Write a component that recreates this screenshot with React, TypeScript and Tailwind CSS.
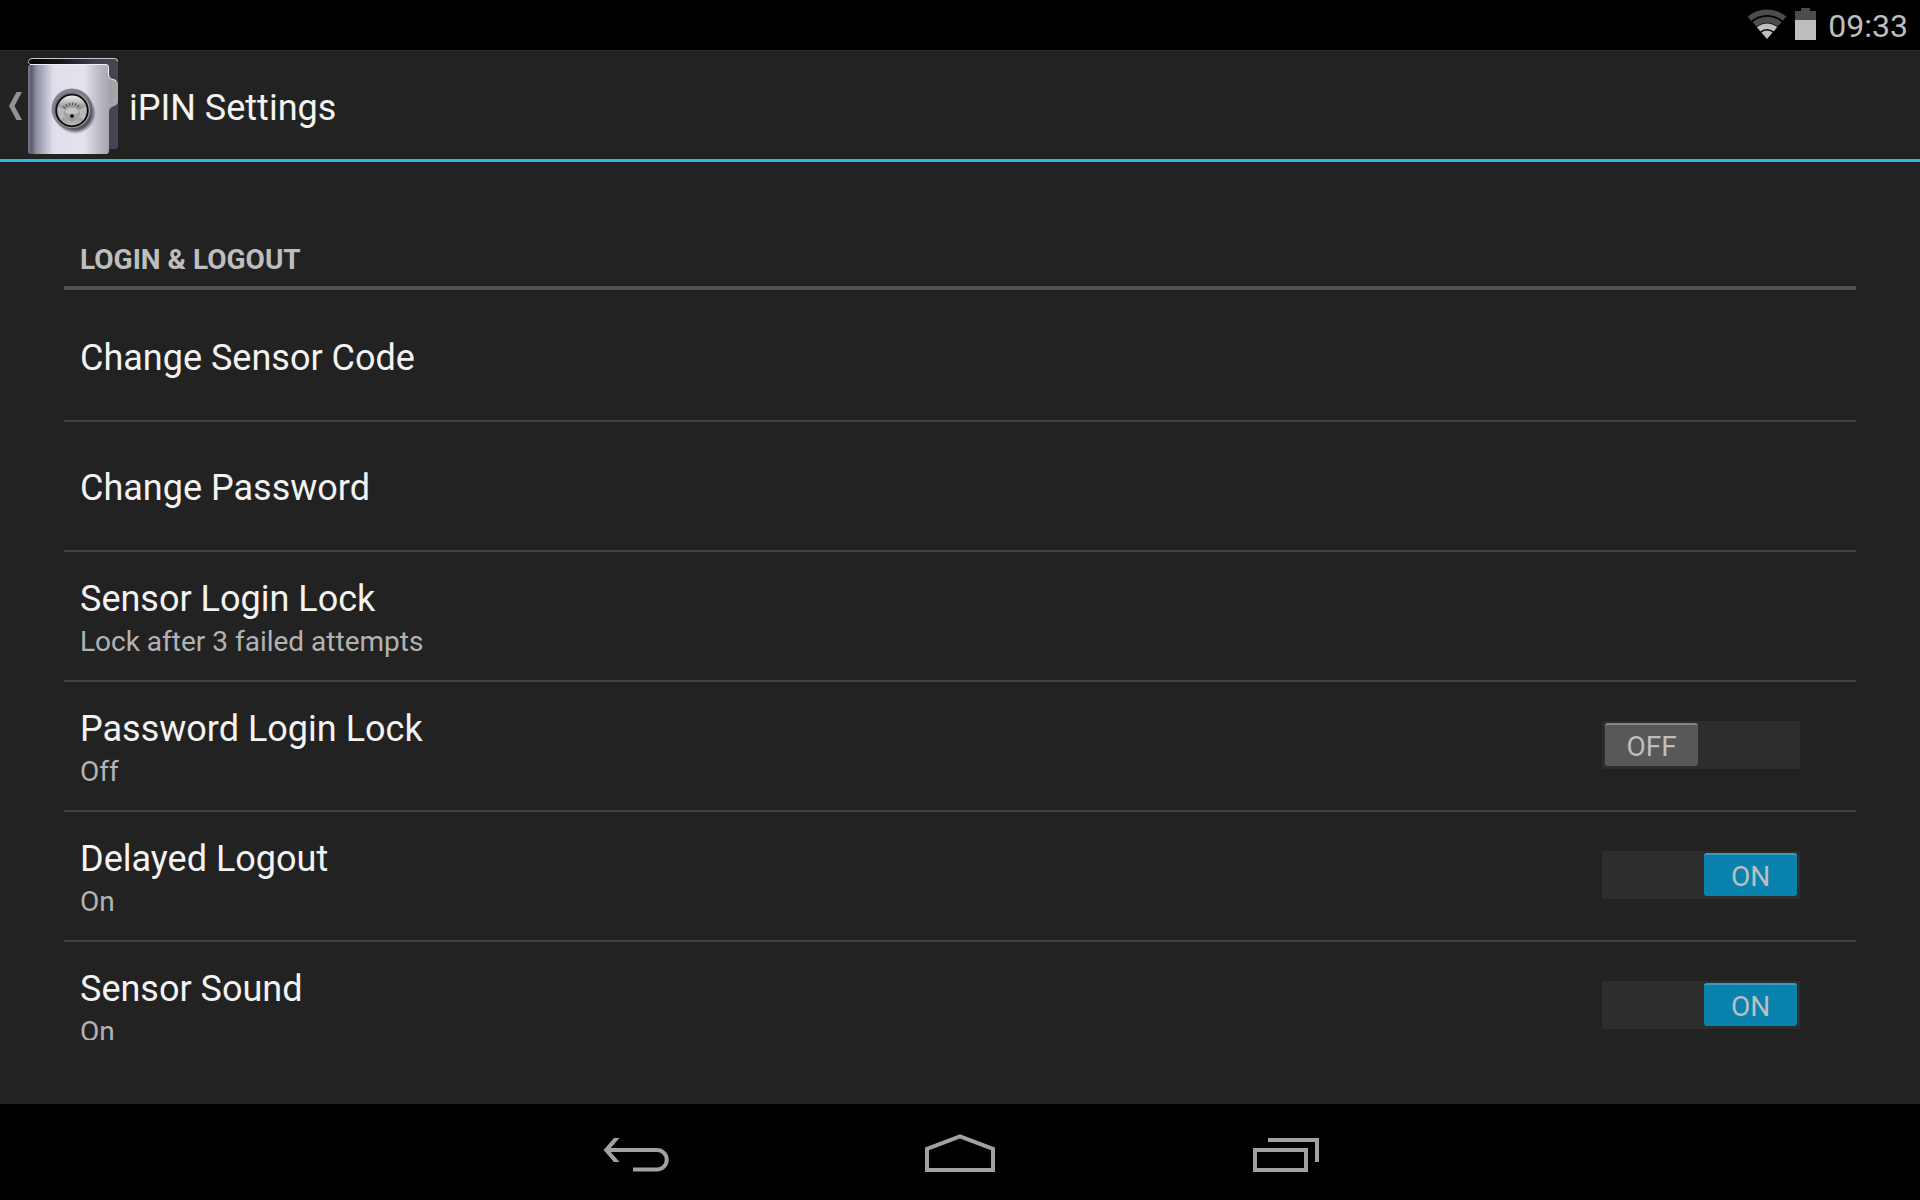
import React, { useState } from 'react';
import clsx from 'clsx';

type Setting = {
  id: string;
  title: string;
  summary?: string;
  toggle?: boolean;
};

const settings: Setting[] = [
  { id: 'sensor-code', title: 'Change Sensor Code' },
  { id: 'password', title: 'Change Password' },
  { id: 'sensor-lock', title: 'Sensor Login Lock', summary: 'Lock after 3 failed attempts' },
  { id: 'password-lock', title: 'Password Login Lock', toggle: true },
  { id: 'delayed-logout', title: 'Delayed Logout', toggle: true },
  { id: 'sensor-sound', title: 'Sensor Sound', toggle: true },
];

const WifiIcon = () => (
  <svg width="40" height="32" viewBox="0 0 40 32" aria-hidden="true">
    <defs>
      <clipPath id="wifi-fan">
        <path d="M20 31L-5 2V-6h50v8z" />
      </clipPath>
    </defs>
    <g clipPath="url(#wifi-fan)" fill="none">
      <circle cx="20" cy="31" r="26.800" stroke="#4c4c4c" strokeWidth="5.500" />
      <circle cx="20" cy="31" r="19.300" stroke="#4c4c4c" strokeWidth="6" />
      <circle cx="20" cy="31" r="12.800" stroke="#bebebe" strokeWidth="5.500" />
      <circle cx="20" cy="31" r="8.500" fill="#bebebe" />
    </g>
  </svg>
);

const BatteryIcon = () => (
  <svg width="21" height="32" viewBox="0 0 21 32" aria-hidden="true">
    <path d="M6 0h9v3h6v9H0V3h6z" fill="#4c4c4c" />
    <path d="M0 12h21v20H0z" fill="#bebebe" />
  </svg>
);

const SafeIcon = () => (
  <svg width="90" height="96" viewBox="8 8 90 96" aria-hidden="true">
    <defs>
      <linearGradient id="cover" x1="0" x2="1" y1="0" y2="0">
        <stop offset="0" stopColor="#77778a" />
        <stop offset="0.04" stopColor="#5c5c70" />
        <stop offset="0.09" stopColor="#8d8da0" />
        <stop offset="0.28" stopColor="#dfdeea" />
        <stop offset="0.62" stopColor="#e3e2ed" />
        <stop offset="0.8" stopColor="#b9b9c2" />
        <stop offset="0.92" stopColor="#a2a2a6" />
        <stop offset="1" stopColor="#a8a8ac" />
      </linearGradient>
      <linearGradient id="back" x1="0" x2="1" y1="0" y2="0">
        <stop offset="0" stopColor="#000000" />
        <stop offset="0.35" stopColor="#15151c" />
        <stop offset="0.75" stopColor="#40404f" />
        <stop offset="1" stopColor="#454555" />
      </linearGradient>
      <linearGradient id="bezel" x1="0" x2="1" y1="0" y2="1">
        <stop offset="0" stopColor="#858793" />
        <stop offset="0.5" stopColor="#7d808c" />
        <stop offset="1" stopColor="#3f414b" />
      </linearGradient>
      <linearGradient id="ring" x1="0" x2="1" y1="0" y2="1">
        <stop offset="0" stopColor="#5f626c" />
        <stop offset="0.5" stopColor="#8b8e99" />
        <stop offset="1" stopColor="#b4b7c1" />
      </linearGradient>
      <linearGradient id="face" x1="0" x2="0" y1="0" y2="1">
        <stop offset="0" stopColor="#f2f2f2" />
        <stop offset="0.35" stopColor="#a4a4a4" />
        <stop offset="0.6" stopColor="#858585" />
        <stop offset="1" stopColor="#bdbdbd" />
      </linearGradient>
      <radialGradient id="shadow">
        <stop offset="0.75" stopColor="#33333d" stopOpacity="0.9" />
        <stop offset="1" stopColor="#33333d" stopOpacity="0" />
      </radialGradient>
    </defs>
    <path d="M8 11q0-3 3-3h84q3 0 3 3v85q0 3-3 3H12q-4 0-4-4z" fill="url(#back)" />
    <path d="M9.500 14q-1-1-1-2.500 0-3 3.500-3h82.500q3 0 3 3" fill="none" stroke="#c9c9d0" />
    <path
      d="M8 17q0-3 3-3h75q3 0 3 3v8q0 3 3 4l4 1.500q2 1 2 3V52q0 2-2 3l-4 2q-3 1-3 5v39q0 3-3 3H11q-3 0-3-3z"
      fill="url(#cover)"
    />
    <path d="M10 14.500h75q3.500 0 3.500 3.500v7q0 3 3 4l4.500 1.500" fill="none" stroke="#f0f0f5" />
    <circle cx="55" cy="63" r="21" fill="url(#shadow)" />
    <circle cx="52" cy="59" r="20.500" fill="url(#bezel)" />
    <circle cx="52" cy="60" r="18" fill="url(#ring)" />
    <circle cx="52" cy="60.500" r="15.800" fill="url(#face)" stroke="#0b0b0d" strokeWidth="1.800" />
    <path d="M38 57l6 2 1 7-4 4a15 15 0 0 1-3-13zM66 57l-6 2-1 7 4 4a15 15 0 0 0 3-13z" fill="#c9c9c9" opacity="0.7" />
    <circle cx="52" cy="63.500" r="8.500" fill="#a0a0a0" stroke="#b8b8b8" />
    <path d="M44 58a10 10 0 0 1 16 0" fill="none" stroke="#5c5c5c" strokeWidth="3" strokeDasharray="1.500 1.500" />
    <path d="M45 62a8 8 0 0 1 14 0l-7 4z" fill="#c4c4c4" />
    <circle cx="52" cy="66" r="2" fill="#151515" />
    <path d="M52 67v4" stroke="#777777" />
  </svg>
);

const BackIcon = () => (
  <svg width="120" height="96" viewBox="0 0 120 96" fill="none" aria-hidden="true">
    <path d="M26 46h51a9.500 9.500 0 0 1 0 19.500H53" stroke="#a1a1a1" strokeWidth="4" />
    <path d="M34 34h5.500L29 46l10.500 12H34L23.500 46z" fill="#a1a1a1" />
  </svg>
);

const HomeIcon = () => (
  <svg width="120" height="96" viewBox="0 0 120 96" fill="none" aria-hidden="true">
    <path d="M27 45v21h66V45L60 32.500z" stroke="#a1a1a1" strokeWidth="4" />
  </svg>
);

const RecentsIcon = () => (
  <svg width="120" height="96" viewBox="0 0 120 96" fill="none" stroke="#a1a1a1" strokeWidth="4" aria-hidden="true">
    <path d="M35 46h51v20H35zM48 36h49v22" />
  </svg>
);

const navButtons = [
  { label: 'Back', icon: BackIcon },
  { label: 'Home', icon: HomeIcon },
  { label: 'Recent apps', icon: RecentsIcon },
];

const RowText: React.FC<{ title: string; summary?: string }> = ({ title, summary }) => (
  <span className={clsx('flex flex-col', summary ? 'pt-0.5' : 'pt-1')}>
    <span className="text-4xl leading-[50px] text-[#f3f3f3]">{title}</span>
    {summary && <span className="text-[28px] leading-9 text-[#b3b3b3]">{summary}</span>}
  </span>
);

const Switch: React.FC<{ on: boolean; onChange: () => void }> = ({ on, onChange }) => (
  <span className={clsx('mb-0.5 flex h-12 w-[198px] bg-[#2d2d2d] px-[3px] py-0.5', on ? 'justify-end' : 'justify-start')}>
    <input type="checkbox" role="switch" checked={on} onChange={onChange} className="sr-only" />
    <span
      className={clsx(
        'h-[43px] w-[93px] rounded-[3px] border-t-2 text-center text-[28px] leading-[44px] text-[#bebebe]',
        on ? 'border-[#3a9dc0] bg-[#0983ae]' : 'border-[#858585] bg-[#585858]'
      )}
    >
      {on ? 'ON' : 'OFF'}
    </span>
  </span>
);

const App: React.FC = () => {
  const [enabled, setEnabled] = useState<Record<string, boolean>>({
    'password-lock': false,
    'delayed-logout': true,
    'sensor-sound': true,
  });

  const toggle = (id: string) => setEnabled((prev) => ({ ...prev, [id]: !prev[id] }));

  return (
    <div className="flex h-screen flex-col bg-[#222222] font-[Roboto,sans-serif]">
      <div className="flex h-[50px] shrink-0 items-center justify-end bg-black pr-3">
        <div className="mr-3 flex gap-2 pb-0.5">
          <WifiIcon />
          <BatteryIcon />
        </div>
        <time className="pt-0.5 text-[32px] leading-9 text-[#bebebe]">09:33</time>
      </div>

      <header className="flex h-28 shrink-0 items-center border-t border-b-3 border-t-[#2c2c2c] border-b-[#33b5e5] pt-0.5 pl-2">
        <button type="button" aria-label="Navigate up" className="flex items-center gap-1.5">
          <svg width="14" height="28" viewBox="0 0 14 28" aria-hidden="true">
            <path d="M8.500 0H14L6.500 14 14 28H8.500L1 14z" fill="#929292" />
          </svg>
          <SafeIcon />
        </button>
        <h1 className="ml-[11px] pt-1 text-4xl leading-[50px] text-[#f3f3f3]">iPIN Settings</h1>
      </header>

      <main className="min-h-0 flex-1 px-16 pb-16">
        <div className="h-full overflow-y-auto [scrollbar-width:none]">
          <h2 className="border-b-4 border-[#505050] px-4 pt-20 pb-2 text-[28px] leading-9 font-bold text-[#bebebe]">
            LOGIN &amp; LOGOUT
          </h2>
          <ul className="divide-y-2 divide-[#414141] pt-0.5">
            {settings.map((item) => (
              <li key={item.id}>
                {item.toggle ? (
                  <label className="flex h-32 cursor-pointer items-center justify-between pr-14 pl-4">
                    <RowText title={item.title} summary={enabled[item.id] ? 'On' : 'Off'} />
                    <Switch on={enabled[item.id]} onChange={() => toggle(item.id)} />
                  </label>
                ) : (
                  <button type="button" className="flex h-32 w-full items-center px-4 text-left">
                    <RowText title={item.title} summary={item.summary} />
                  </button>
                )}
              </li>
            ))}
          </ul>
        </div>
      </main>

      <nav className="flex h-24 shrink-0 justify-center bg-black">
        {navButtons.map(({ label, icon: Icon }) => (
          <button key={label} type="button" aria-label={label} className="flex w-80 items-center justify-center">
            <Icon />
          </button>
        ))}
      </nav>
    </div>
  );
};

export default App;
